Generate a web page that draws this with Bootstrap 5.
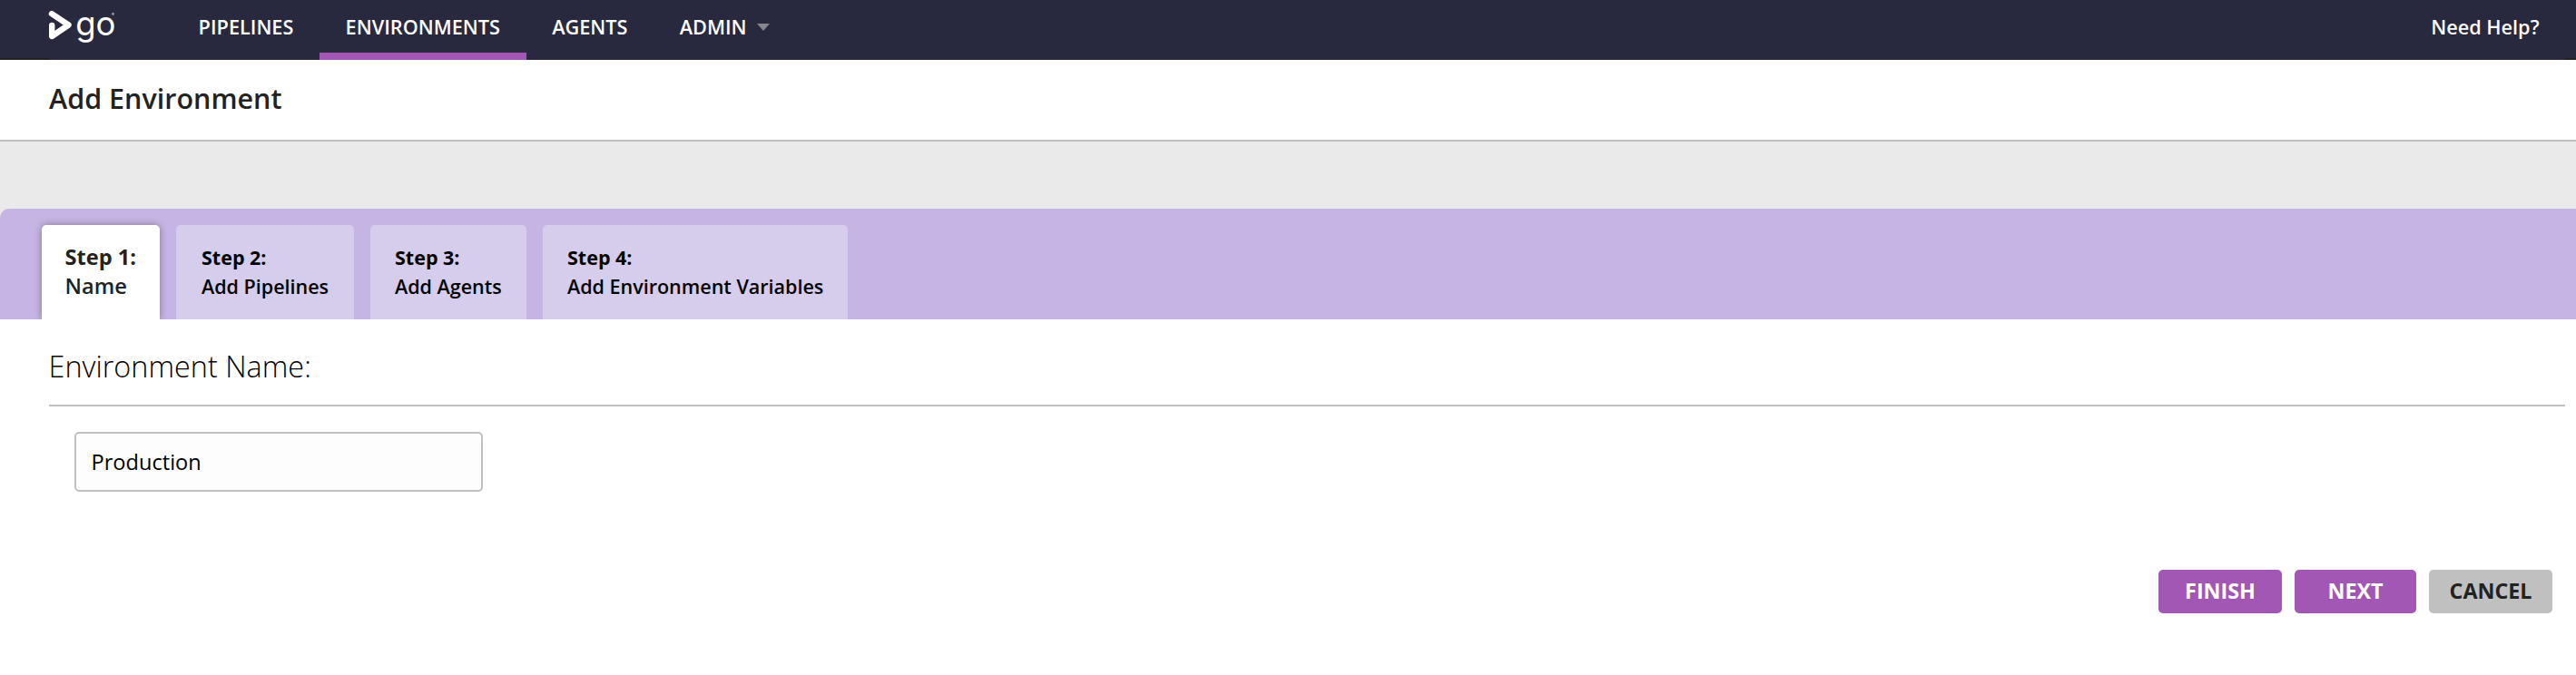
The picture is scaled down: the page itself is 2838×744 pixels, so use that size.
<!DOCTYPE html>
<html lang="en">
<head>
<meta charset="utf-8">
<title>Add Environment</title>
<link href="https://cdn.jsdelivr.net/npm/bootstrap@5.3.0/dist/css/bootstrap.min.css" rel="stylesheet">
<style>
body{font-family:"Open Sans",sans-serif;color:#222;background:#fff;line-height:normal}
.topbar{height:66px;background:#28283e;border-bottom:2px solid #222;padding:0 12px 0 54px}
.topbar-inner{height:66px;background:#28283e}
.brand{width:73px;height:50px;margin-top:8px;overflow:visible}
.menu{margin-left:63px}
.menu .nav-link{height:66px;padding:0 28.6px;font-size:21.7px;line-height:60px;font-weight:600;color:#fff;border-radius:0}
.menu .nav-link.active{border-bottom:8px solid #a257b5}
.caret{width:14px;height:8px;margin-left:11px;vertical-align:4px}
.help{font-size:21.7px;line-height:60px;font-weight:600;color:#fff;margin-right:28.5px;text-decoration:none}
.title-bar{height:90px;border-bottom:2px solid #c0c0c0;padding-left:54px}
.title-bar h1{font-size:30.5px;line-height:84px;font-weight:600;margin:0}
.spacer{background:#eaeaea;padding-top:74px}
.steps{height:122px;background:#c6b5e4;border-top-left-radius:10px;padding:18px 0 0 46px;gap:18px;overflow:hidden}
.steps .nav-link{height:104px;border-radius:5px 5px 0 0;background:#d6ccec;color:#000;font-size:21.5px;line-height:32px;font-weight:600;padding:20px 0 0 27px;white-space:nowrap}
.steps b{font-weight:700}
.steps .nav-link.active{width:130px;background:#fff;color:#222;box-shadow:0 0 8px rgba(0,0,0,.35);font-size:23.6px;padding:19px 0 0 25.5px}
.steps .step-pipelines{width:196px;padding-left:28px}
.steps .step-agents{width:172px}
.steps .step-variables{width:336px}
.panel{padding:26px 12px 0 54px}
.panel h2{font-size:32.4px;line-height:50px;font-weight:300;color:#000;margin:0;height:70px;border-bottom:2px solid #c0c0c0;text-indent:-.5px}
.env-input{width:450px;height:66px;border:2px solid #c0c0c0;border-radius:5px;margin:28px 0 0 28px;padding:0 16.5px;font-size:23.6px;color:#000;background:#fdfdfd}
.actions{margin-top:86px;padding-right:14px;gap:14px}
.actions .btn{height:48px;padding:0 0 2px;border:0;border-radius:5px;font-size:23.3px;line-height:44px;font-weight:700;color:#fff;background:#a257b5;width:136px}
.actions .btn-next{width:134px}
.actions .btn-cancel{background:#c0c0c0;color:#222}
</style>
</head>
<body>
<header class="topbar"><div class="topbar-inner d-flex">
<svg class="brand flex-shrink-0" viewBox="54 8 73 50"><path d="M57 15.200L75.500 27.500L57.200 40V28" fill="none" stroke="#fff" stroke-width="6.400" stroke-linecap="round" stroke-linejoin="round"/><text x="83.200" y="38.700" font-family="Inter, sans-serif" font-size="36.500" fill="#fff">go</text><circle cx="124.500" cy="15.300" r="1.500" fill="#92929e"/></svg>
<ul class="nav menu flex-nowrap">
<li class="nav-item"><a class="nav-link" href="#">PIPELINES</a></li>
<li class="nav-item"><a class="nav-link active" href="#">ENVIRONMENTS</a></li>
<li class="nav-item"><a class="nav-link" href="#">AGENTS</a></li>
<li class="nav-item"><a class="nav-link" href="#">ADMIN<svg class="caret" viewBox="0 0 14 8"><path d="M0 0H14L7 8Z" fill="#86868f"/></svg></a></li>
</ul>
<a class="help ms-auto" href="#">Need Help?</a>
</div></header>
<div class="title-bar"><h1>Add Environment</h1></div>
<div class="spacer"><nav class="nav steps flex-nowrap">
<a class="nav-link active" href="#"><b>Step 1:</b><br>Name</a>
<a class="nav-link step-pipelines" href="#"><b>Step 2:</b><br>Add Pipelines</a>
<a class="nav-link step-agents" href="#"><b>Step 3:</b><br>Add Agents</a>
<a class="nav-link step-variables" href="#"><b>Step 4:</b><br>Add Environment Variables</a>
</nav></div>
<main class="panel"><h2>Environment Name:</h2>
<input class="form-control env-input" type="text" value="Production" aria-label="Environment Name">
<div class="actions d-flex justify-content-end"><button class="btn">FINISH</button><button class="btn btn-next">NEXT</button><button class="btn btn-cancel">CANCEL</button></div>
</main>
<script src="https://cdn.jsdelivr.net/npm/bootstrap@5.3.0/dist/js/bootstrap.bundle.min.js"></script>
</body>
</html>
